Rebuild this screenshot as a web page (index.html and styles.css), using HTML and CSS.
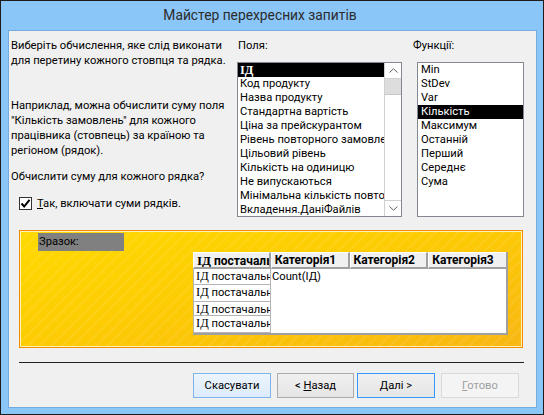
FILE: index.html
```html
<!DOCTYPE html>
<html lang="uk">
<head>
<meta charset="utf-8">
<title>Майстер перехресних запитів</title>
<link rel="stylesheet" href="styles.css">
</head>
<body>
<div class="window">
  <div class="titlebar">Майстер перехресних запитів</div>
  <div class="client">
    <div class="top">
      <div class="desc">
        <p class="p1">Виберіть обчислення, яке слід виконати<br>для перетину кожного стовпця та рядка.</p>
        <p class="p2">Наприклад, можна обчислити суму поля<br>"Кількість замовлень" для кожного<br>працівника (стовпець) за країною та<br>регіоном (рядок).</p>
        <p class="p3">Обчислити суму для кожного рядка?</p>
        <div class="check">
          <span class="cbox"><svg width="11" height="11" viewBox="0 0 11 11"><path d="M1.5 5.5 L4.2 8.5 L9.5 1.8" fill="none" stroke="#000" stroke-width="2"/></svg></span>
          <span class="clabel"><u>Т</u>ак, включати суми рядків.</span>
        </div>
      </div>
      <div class="fields">
        <div class="lbl">Поля:</div>
        <div class="listbox fieldsbox">
          <ul class="items">
            <li class="sel"><span class="serif b">ІД</span></li>
            <li>Код продукту</li>
            <li>Назва продукту</li>
            <li>Стандартна вартість</li>
            <li>Ціна за прейскурантом</li>
            <li>Рівень повторного замовлення</li>
            <li>Цільовий рівень</li>
            <li>Кількість на одиницю</li>
            <li>Не випускаються</li>
            <li>Мінімальна кількість повторного замовлення</li>
            <li>Вкладення.ДаніФайлів</li>
          </ul>
          <div class="scrollbar">
            <div class="sbtn up"><svg width="9" height="5" viewBox="0 0 9 5"><path d="M0.5 4.5 L4.5 0.8 L8.5 4.5" fill="none" stroke="#606060" stroke-width="1"/></svg></div>
            <div class="track"><div class="thumb"></div></div>
            <div class="sbtn down"><svg width="9" height="5" viewBox="0 0 9 5"><path d="M0.5 0.5 L4.5 4.2 L8.5 0.5" fill="none" stroke="#606060" stroke-width="1"/></svg></div>
          </div>
        </div>
      </div>
      <div class="funcs">
        <div class="lbl">Функції:</div>
        <div class="listbox funcsbox">
          <ul class="items">
            <li>Min</li>
            <li>StDev</li>
            <li>Var</li>
            <li class="sel">Кількість</li>
            <li>Максимум</li>
            <li>Останній</li>
            <li>Перший</li>
            <li>Середнє</li>
            <li>Сума</li>
          </ul>
        </div>
      </div>
    </div>

    <div class="sample">
      <div class="sample-label">Зразок:</div>
      <div class="xtab">
        <div class="hrow">
          <div class="hcell c1"><span class="serif">ІД</span> постачальника</div>
          <div class="hcell">Категорія1</div>
          <div class="hcell">Категорія2</div>
          <div class="hcell">Категорія3</div>
        </div>
        <div class="xbody">
          <div class="rowheads">
            <div class="rcell r1"><span class="serif">ІД</span> постачальника</div>
            <div class="rcell r2"><span class="serif">ІД</span> постачальника</div>
            <div class="rcell r3"><span class="serif">ІД</span> постачальника</div>
            <div class="rcell r4"><span class="serif">ІД</span> постачальника</div>
          </div>
          <div class="vals">Count(ІД)</div>
        </div>
      </div>
    </div>

    <div class="sep"></div>

    <div class="buttons">
      <button class="btn hot">Скасувати</button>
      <button class="btn back">&lt; <u>Н</u>азад</button>
      <button class="btn def"><u>Д</u>алі &gt;</button>
      <button class="btn dis"><u>Г</u>отово</button>
    </div>
  </div>
</div>
</body>
</html>
```

FILE: styles.css
```css
* { box-sizing: border-box; }
html, body { margin: 0; padding: 0; }
body {
  width: 544px;
  height: 415px;
  overflow: hidden;
  font-family: Roboto, "Liberation Sans", sans-serif;
  font-size: 11.2px;
  color: #000;
}
.window {
  width: 544px;
  height: 415px;
  border: 1px solid #1c1c1c;
  background: #8bc6f9;
}
.titlebar {
  height: 29px;
  line-height: 29px;
  text-align: center;
  font-size: 13.8px;
  color: #2b2b2b;
  padding-right: 24px;
}
.client {
  margin: 0 6px 0 7px;
  width: 529px;
  height: 378px;
  border: 1px solid #74acdf;
  background: #f0f0f0;
}
.top {
  display: flex;
  padding: 7px 0 0 2px;
}
.desc {
  width: 226px;
  white-space: nowrap;
}
.desc p {
  margin: 0;
  line-height: 15px;
}
.p2 { margin-top: 30px !important; }
.p3 { margin-top: 11px !important; }
.check {
  display: flex;
  align-items: center;
  margin-top: 12px;
  margin-left: 8px;
  line-height: 15px;
}
.cbox {
  width: 13px;
  height: 13px;
  border: 1px solid #333;
  background: #fff;
  display: flex;
  align-items: center;
  justify-content: center;
  margin-right: 5px;
}
.lbl {
  line-height: 15px;
  height: 15px;
  margin-bottom: 9px;
}
.fields { width: 165px; }
.fields .lbl { padding-left: 1px; }
.funcs { width: 111px; margin-left: 11px; }
.listbox {
  height: 155px;
  border: 1px solid #828790;
  background: #fff;
  overflow: hidden;
}
.fieldsbox { display: flex; }
.funcsbox { margin-left: 4px; width: 107px; }
.items {
  list-style: none;
  margin: 0;
  padding: 0;
  flex: 1;
  min-width: 0;
}
.items li {
  height: 14px;
  line-height: 14px;
  white-space: nowrap;
  overflow: hidden;
  padding-left: 2px;
}
.funcsbox .items li { padding-left: 3px; }
.items li.sel { background: #000; color: #fff; }
.serif { font-family: "Liberation Serif", "DejaVu Serif", serif; font-size: 12.5px; }
.b { font-weight: bold; }
.scrollbar {
  width: 17px;
  border-left: 1px solid #d0d0d0;
  display: flex;
  flex-direction: column;
  background: #fff;
}
.sbtn {
  height: 16px;
  display: flex;
  align-items: center;
  justify-content: center;
  background: #fff;
}
.sbtn.up { border-bottom: 1px solid #d0d0d0; }
.sbtn.down { border-top: 1px solid #d0d0d0; }
.track { flex: 1; }
.thumb {
  height: 16px;
  background: #dddddd;
  border-bottom: 1px solid #c8c8c8;
}

.sample {
  margin: 13px 0 0 10px;
  width: 504px;
  height: 118px;
  border: 1px solid #f28c00;
  box-shadow: inset 0 0 0 1px #fff3b8;
  padding: 2px 0 0 18px;
  background:
    repeating-linear-gradient(135deg, rgba(255,255,255,0) 0 6px, rgba(255,255,255,0.07) 6px 8px),
    linear-gradient(165deg, #ffd900 0%, #fdcc04 45%, #f8b713 100%);
}
.sample-label {
  width: 86px;
  height: 18px;
  line-height: 18px;
  background: #808080;
  padding-left: 1px;
}
.xtab {
  margin: 1px 0 0 155px;
  width: 315px;
  background: #fff;
  border-right: 2px solid #a0a0a0;
  border-bottom: 2px solid #a0a0a0;
}
.hrow { display: flex; height: 17px; }
.hcell {
  width: 79px;
  height: 17px;
  line-height: 15px;
  background: #f0f0f0;
  border-top: 1px solid #fff;
  border-left: 1px solid #fff;
  border-right: 2px solid #a0a0a0;
  border-bottom: 2px solid #a0a0a0;
  font-weight: bold;
  font-size: 12px;
  white-space: nowrap;
  overflow: hidden;
  padding-left: 3px;
}
.hcell .serif { font-size: 13px; font-weight: bold; }
.hcell.c1 { width: 78px; }
.hcell:last-child { width: 78px; border-right: none; }
.xbody { display: flex; }
.rowheads { width: 78px; }
.rcell {
  border: 1px solid #b4b4b4;
  border-top: none;
  white-space: nowrap;
  overflow: hidden;
  padding-left: 2px;
  line-height: 14px;
}
.r1 { height: 16px; }
.r2 { height: 17px; }
.r3 { height: 14px; }
.r4 { height: 17px; }
.vals {
  flex: 1;
  padding: 0 0 0 1px;
  line-height: 15px;
}

.sep {
  margin: 14px 0 0 10px;
  width: 505px;
  height: 1px;
  background: #202020;
}
.buttons {
  display: flex;
  margin: 10px 0 0 184px;
}
.btn {
  font-family: Roboto, "Liberation Sans", sans-serif;
  font-size: 11.2px;
  height: 25px;
  width: 78px;
  padding: 0;
  color: #000;
  border: 1px solid #acacac;
  background: linear-gradient(#f0f0f0, #e5e5e5);
}
.btn u { text-decoration-thickness: 1px; }
.btn.hot {
  border-color: #7eb4ea;
  background: linear-gradient(#ecf4fc, #dcecfc);
}
.btn.back { width: 77px; margin-left: 6px; }
.btn.def { margin-left: 3px; border-color: #3399ff; }
.btn.dis {
  margin-left: 6px;
  border-color: #d9d9d9;
  background: #f4f4f4;
  color: #a0a0a0;
}
```
